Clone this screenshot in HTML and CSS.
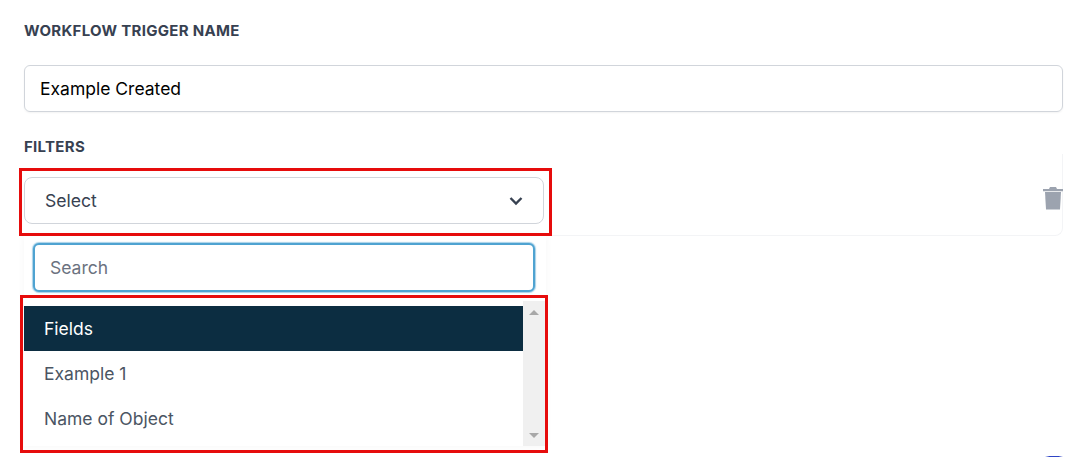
FILE: index.html
```html
<!DOCTYPE html>
<html lang="en">
<head>
    <meta charset="UTF-8">
    <meta name="viewport" content="width=device-width, initial-scale=1.0">
    <title>Workflow Trigger</title>
    <link rel="stylesheet" href="styles.css">
</head>
<body>
    <div class="container">
        <label class="field-label name-label">Workflow Trigger Name</label>
        <div class="text-input">Example Created</div>
        <label class="field-label filters-label">Filters</label>

        <div class="filter-row">
            <div class="select-box">
                <span>Select</span>
                <svg class="chevron" width="14" height="10" viewBox="0 0 14 10">
                    <path d="M1.5 2 L7 7.5 L12.5 2" fill="none" stroke="#374151" stroke-width="2.4"/>
                </svg>
            </div>
            <svg class="trash" width="20" height="23" viewBox="0 0 20 23">
                <path d="M7 0 H13 L14 2 H20 V4.2 H0 V2 H6 Z" fill="#9ca3af"/>
                <path d="M2 5 H18 L17 22.5 H3 Z" fill="#9ca3af"/>
            </svg>
        </div>

        <div class="dropdown">
            <div class="search-wrap">
                <input class="search" type="text" placeholder="Search">
            </div>
            <div class="options">
                <ul class="option-list">
                    <li class="option active">Fields</li>
                    <li class="option">Example 1</li>
                    <li class="option">Name of Object</li>
                </ul>
                <div class="scrollbar">
                    <span class="arrow-up"></span>
                    <span class="arrow-down"></span>
                </div>
            </div>
        </div>
    </div>

    <!-- annotation boxes on top of the screenshot -->
    <div class="mark mark-select"></div>
    <div class="mark mark-options"></div>
    <div class="chat-bubble"></div>
</body>
</html>
```

FILE: styles.css
```css
html, body {
    height: 100%;
}
body {
    font-family: Inter, "Liberation Sans", sans-serif;
    margin: 0;
    background-color: #fff;
    color: #374151;
    overflow: hidden;
    position: relative;
}
.container {
    padding: 22px 29px 0 24px;
}
.field-label {
    display: block;
    font-size: 15px;
    font-weight: 700;
    line-height: 17px;
    letter-spacing: 0.3px;
    text-transform: uppercase;
    color: #374151;
}
.text-input {
    margin-top: 26px;
    height: 47px;
    box-sizing: border-box;
    padding: 0 15px;
    display: flex;
    align-items: center;
    font-size: 17.5px;
    color: #000;
    border: 1px solid #d1d5db;
    border-radius: 6px;
    box-shadow: 0 1px 2px rgba(0, 0, 0, 0.05);
}
.filters-label {
    margin-top: 26px;
}
.filter-row {
    display: flex;
    align-items: center;
    justify-content: space-between;
    padding: 23px 0 11px;
    margin-top: -1px;
    border: 1px solid #f3f4f6;
    border-width: 0 1px 1px 0;
    border-radius: 0 0 8px 0;
}
.select-box {
    width: 520px;
    height: 47px;
    box-sizing: border-box;
    padding: 0 20px;
    display: flex;
    align-items: center;
    justify-content: space-between;
    font-size: 17.6px;
    border: 1px solid #d1d5db;
    border-radius: 8px;
}
.trash {
    margin: 0 -1px 4px 0;
}
.dropdown {
    width: 522px;
    background: #fff;
    box-shadow: 0 0 8px rgba(0, 0, 0, 0.04);
}
.search-wrap {
    padding: 7px 11px 9px 9px;
}
.search {
    display: block;
    width: 100%;
    height: 49px;
    box-sizing: border-box;
    padding: 0 15px;
    font: 17.5px Inter, "Liberation Sans", sans-serif;
    border: 2px solid #4fa3d1;
    border-radius: 6px;
    box-shadow: 0 0 1px 1px rgba(79, 163, 209, 0.5);
    outline: none;
}
.search::placeholder {
    color: #6b7280;
    opacity: 1;
}
.options {
    display: flex;
}
.option-list {
    list-style: none;
    margin: 0;
    padding: 5px 0;
    width: 499px;
}
.option {
    height: 45px;
    padding: 0 20px;
    display: flex;
    align-items: center;
    font-size: 17.5px;
    color: #4b5563;
}
.option.active {
    background-color: #0c2d41;
    color: #fff;
}
.scrollbar {
    width: 22px;
    background-color: #f0f0f0;
    display: flex;
    flex-direction: column;
    align-items: center;
    justify-content: space-between;
    padding: 9px 0 8px;
    box-sizing: border-box;
}
.arrow-up, .arrow-down {
    width: 0;
    height: 0;
    border-left: 5px solid transparent;
    border-right: 5px solid transparent;
}
.arrow-up {
    border-bottom: 5px solid #a8a8a8;
}
.arrow-down {
    border-top: 5px solid #a8a8a8;
}
.mark {
    position: absolute;
    box-sizing: border-box;
    border: 3px solid #e60c0c;
}
.mark-select {
    left: 19px;
    top: 168px;
    width: 533px;
    height: 68px;
}
.mark-options {
    left: 20px;
    top: 295px;
    width: 528px;
    height: 158px;
}
.chat-bubble {
    position: absolute;
    left: 1045px;
    top: 456px;
    width: 18px;
    height: 1px;
    background: linear-gradient(to right, transparent, #2f45c5 25%, #2f45c5 75%, transparent);
}
```
